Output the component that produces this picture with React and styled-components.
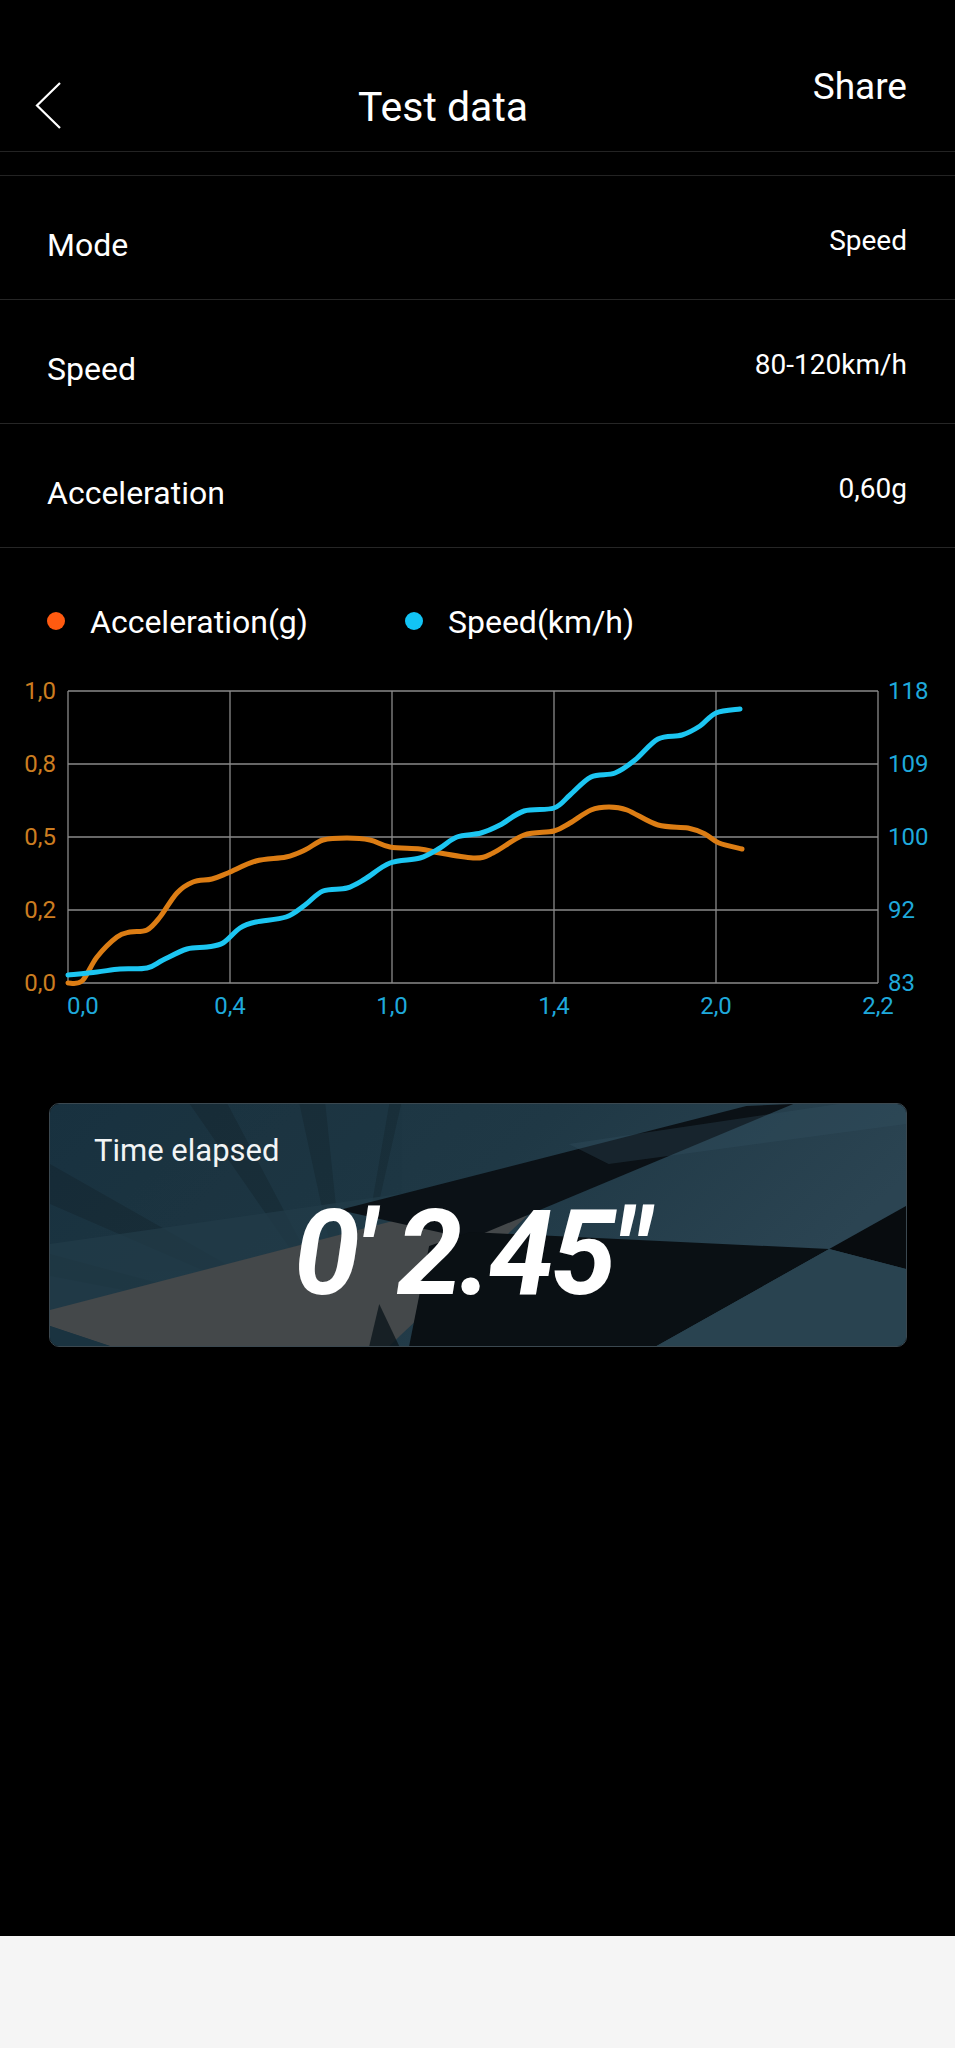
import React from 'react';
import styled, { createGlobalStyle } from 'styled-components';

const GlobalStyle = createGlobalStyle`
  html, body {
    margin: 0;
    padding: 0;
    background: #000;
  }
  body {
    font-family: Roboto, "Noto Sans", "Liberation Sans", sans-serif;
    color: #fff;
  }
`;

const Page = styled.div`
  width: 955px;
  min-height: 2048px;
  background: #000;
  display: flex;
  flex-direction: column;
`;

const Header = styled.div`
  height: 151px;
  display: flex;
  align-items: flex-start;
  border-bottom: 1px solid #232323;
`;

const BackButton = styled.div`
  margin: 82px 0 0 35px;
  width: 27px;
  height: 48px;
`;

const Title = styled.div`
  margin: 87px 0 0 296px;
  font-size: 41px;
  line-height: 41px;
`;

const Share = styled.div`
  margin: 68px 48px 0 auto;
  font-size: 37px;
  line-height: 37px;
`;

const List = styled.div`
  margin-top: 23px;
  border-top: 1px solid #232323;
`;

const Row = styled.div`
  height: 108px;
  padding: 15px 48px 0 47px;
  display: flex;
  align-items: center;
  justify-content: space-between;
  border-bottom: 1px solid #262626;
`;

const Label = styled.span`
  font-size: 32px;
  line-height: 32px;
`;

const Value = styled.span`
  font-size: 28px;
  line-height: 28px;
  margin-bottom: 8px;
`;

const Legend = styled.div`
  margin-top: 58px;
  padding-left: 47px;
  display: flex;
  align-items: center;
`;

const LegendItem = styled.div`
  display: flex;
  align-items: center;
  margin-right: 97px;
  font-size: 32px;
  line-height: 32px;
`;

const Dot = styled.span`
  width: 18px;
  height: 18px;
  border-radius: 50%;
  background: ${({ color }) => color};
  margin: -3px 25px 0 0;
`;

const ChartSvg = styled.svg`
  display: block;
  margin-top: 32px;
`;

const Card = styled.div`
  position: relative;
  margin: 73px 48px 0 49px;
  height: 242px;
  border: 1px solid #3b4850;
  border-radius: 10px;
  overflow: hidden;
  display: flex;
  flex-direction: column;
`;

const CardBg = styled.svg`
  position: absolute;
  inset: 0;
  width: 100%;
  height: 100%;
`;

const CardLabel = styled.div`
  position: relative;
  margin: 31px 0 0 44px;
  font-size: 31px;
  line-height: 31px;
  color: #f2f4f5;
`;

const Elapsed = styled.div`
  position: relative;
  margin-top: 29px;
  padding-right: 16px;
  text-align: center;
  font-size: 118px;
  line-height: 118px;
  font-weight: 700;
  font-style: italic;
  letter-spacing: -3.5px;
`;

const Spacer = styled.div`
  flex: 1;
`;

const BottomBar = styled.div`
  height: 112px;
  background: #f5f5f5;
`;

const rows = [
  ['Mode', 'Speed'],
  ['Speed', '80-120km/h'],
  ['Acceleration', '0,60g'],
];

const ORANGE = '#dc7d14';
const CYAN = '#1cc6f2';

const accel = [
  [68, 983], [82, 981], [97, 957], [117, 937], [130, 932], [147, 930], [160, 917],
  [177, 893], [193, 882], [212, 879], [228, 873], [256, 861], [286, 857], [305, 850],
  [323, 840], [347, 838], [370, 840], [390, 847], [420, 849], [440, 853], [475, 858],
  [493, 853], [524, 835], [554, 831], [570, 823], [591, 810], [609, 807], [627, 810],
  [658, 825], [688, 828], [705, 834], [719, 843], [742, 849],
];

const speed = [
  [68, 975], [97, 972], [120, 969], [147, 968], [163, 960], [187, 949], [207, 947],
  [223, 943], [240, 928], [256, 922], [286, 917], [305, 905], [323, 891], [347, 888],
  [365, 879], [390, 863], [420, 858], [440, 848], [457, 837], [481, 833], [500, 825],
  [524, 811], [554, 808], [570, 795], [591, 777], [615, 773], [635, 760], [658, 739],
  [682, 735], [700, 726], [716, 713], [740, 709],
];

// catmull-rom -> cubic bezier
const smooth = (pts) => {
  let d = `M${pts[0][0]},${pts[0][1]}`;
  for (let i = 0; i < pts.length - 1; i++) {
    const p0 = pts[i - 1] || pts[i];
    const p1 = pts[i];
    const p2 = pts[i + 1];
    const p3 = pts[i + 2] || p2;
    const c1 = [p1[0] + (p2[0] - p0[0]) / 6, p1[1] + (p2[1] - p0[1]) / 6];
    const c2 = [p2[0] - (p3[0] - p1[0]) / 6, p2[1] - (p3[1] - p1[1]) / 6];
    d += ` C${c1[0]},${c1[1]} ${c2[0]},${c2[1]} ${p2[0]},${p2[1]}`;
  }
  return d;
};

const xs = [68, 230, 392, 554, 716, 878];
const ys = [691, 764, 837, 910, 983];
const leftTicks = ['1,0', '0,8', '0,5', '0,2', '0,0'];
const rightTicks = ['118', '109', '100', '92', '83'];
const bottomTicks = ['0,0', '0,4', '1,0', '1,4', '2,0', '2,2'];

const Chart = () => (
  <ChartSvg width="955" height="360" viewBox="0 670 955 360">
    {ys.map((y) => (
      <line key={y} x1="68" x2="878" y1={y} y2={y} stroke="#8a8a8a" strokeWidth="1.3" />
    ))}
    {xs.map((x) => (
      <line key={x} x1={x} x2={x} y1="691" y2="983" stroke="#8a8a8a" strokeWidth="1.3" />
    ))}
    <g fontFamily="Roboto, sans-serif" fontSize="24">
      {leftTicks.map((t, i) => (
        <text key={t} x="56" y={ys[i]} textAnchor="end" dominantBaseline="central" fill="#cc7d20">{t}</text>
      ))}
      {rightTicks.map((t, i) => (
        <text key={t} x="888" y={ys[i]} dominantBaseline="central" fill="#1fa9db">{t}</text>
      ))}
      {bottomTicks.map((t, i) => (
        <text key={t} x={i === 0 ? 67 : xs[i]} y="1006" textAnchor={i === 0 ? 'start' : 'middle'} dominantBaseline="central" fill="#1fa9db">{t}</text>
      ))}
    </g>
    <path d={smooth(accel)} fill="none" stroke={ORANGE} strokeWidth="5" strokeLinecap="round" />
    <path d={smooth(speed)} fill="none" stroke={CYAN} strokeWidth="5" strokeLinecap="round" />
  </ChartSvg>
);

const Backdrop = () => (
  <CardBg viewBox="0 0 858 242" preserveAspectRatio="none">
    <defs>
      <linearGradient id="base" x1="0" y1="0" x2="1" y2="0.3">
        <stop offset="0" stopColor="#19323f" />
        <stop offset="0.55" stopColor="#1f3845" />
        <stop offset="1" stopColor="#2b4452" />
      </linearGradient>
    </defs>
    <rect width="858" height="242" fill="url(#base)" />
    {/* rays */}
    <g fill="#000" opacity="0.14">
      <polygon points="300,230 140,0 178,0" />
      <polygon points="300,230 250,0 276,0" />
      <polygon points="300,230 0,60 0,100" />
      <polygon points="300,230 0,150 0,172" />
      <polygon points="300,230 340,0 352,0" />
    </g>
    <polygon points="0,140 420,80 440,92 0,207" fill="#223c49" opacity="0.7" />
    {/* grey band */}
    <polygon points="0,206 440,92 478,112 340,242 60,242 0,222" fill="#44484a" />
    <polygon points="0,222 60,242 0,242" fill="#1a3340" />
    {/* dark sweeps */}
    <polygon points="290,106 698,2 745,0 421,135 380,126" fill="#0b1116" />
    <polygon points="380,142 421,128 781,145 608,242 360,242" fill="#0a1014" />
    <polygon points="781,145 858,102 858,165" fill="#080c0f" />
    <polygon points="781,145 858,165 858,242 608,242" fill="#294350" />
    <polygon points="330,200 350,242 320,242" fill="#0d171c" opacity="0.8" />
    <polygon points="520,40 858,-10 858,20 560,60" fill="#355363" opacity="0.3" />
  </CardBg>
);

const App = () => (
  <Page>
    <GlobalStyle />
    <Header>
      <BackButton>
        <svg width="27" height="48" viewBox="0 0 27 48">
          <polyline points="25,1 2,23.5 25,46" fill="none" stroke="#fff" strokeWidth="2.2" />
        </svg>
      </BackButton>
      <Title>Test data</Title>
      <Share>Share</Share>
    </Header>
    <List>
      {rows.map(([label, value]) => (
        <Row key={label}>
          <Label>{label}</Label>
          <Value>{value}</Value>
        </Row>
      ))}
    </List>
    <Legend>
      <LegendItem>
        <Dot color="#ff5a10" />
        Acceleration(g)
      </LegendItem>
      <LegendItem>
        <Dot color="#12c4f5" />
        Speed(km/h)
      </LegendItem>
    </Legend>
    <Chart />
    <Card>
      <Backdrop />
      <CardLabel>Time elapsed</CardLabel>
      <Elapsed>0' 2.45"</Elapsed>
    </Card>
    <Spacer />
    <BottomBar />
  </Page>
);

export default App;
